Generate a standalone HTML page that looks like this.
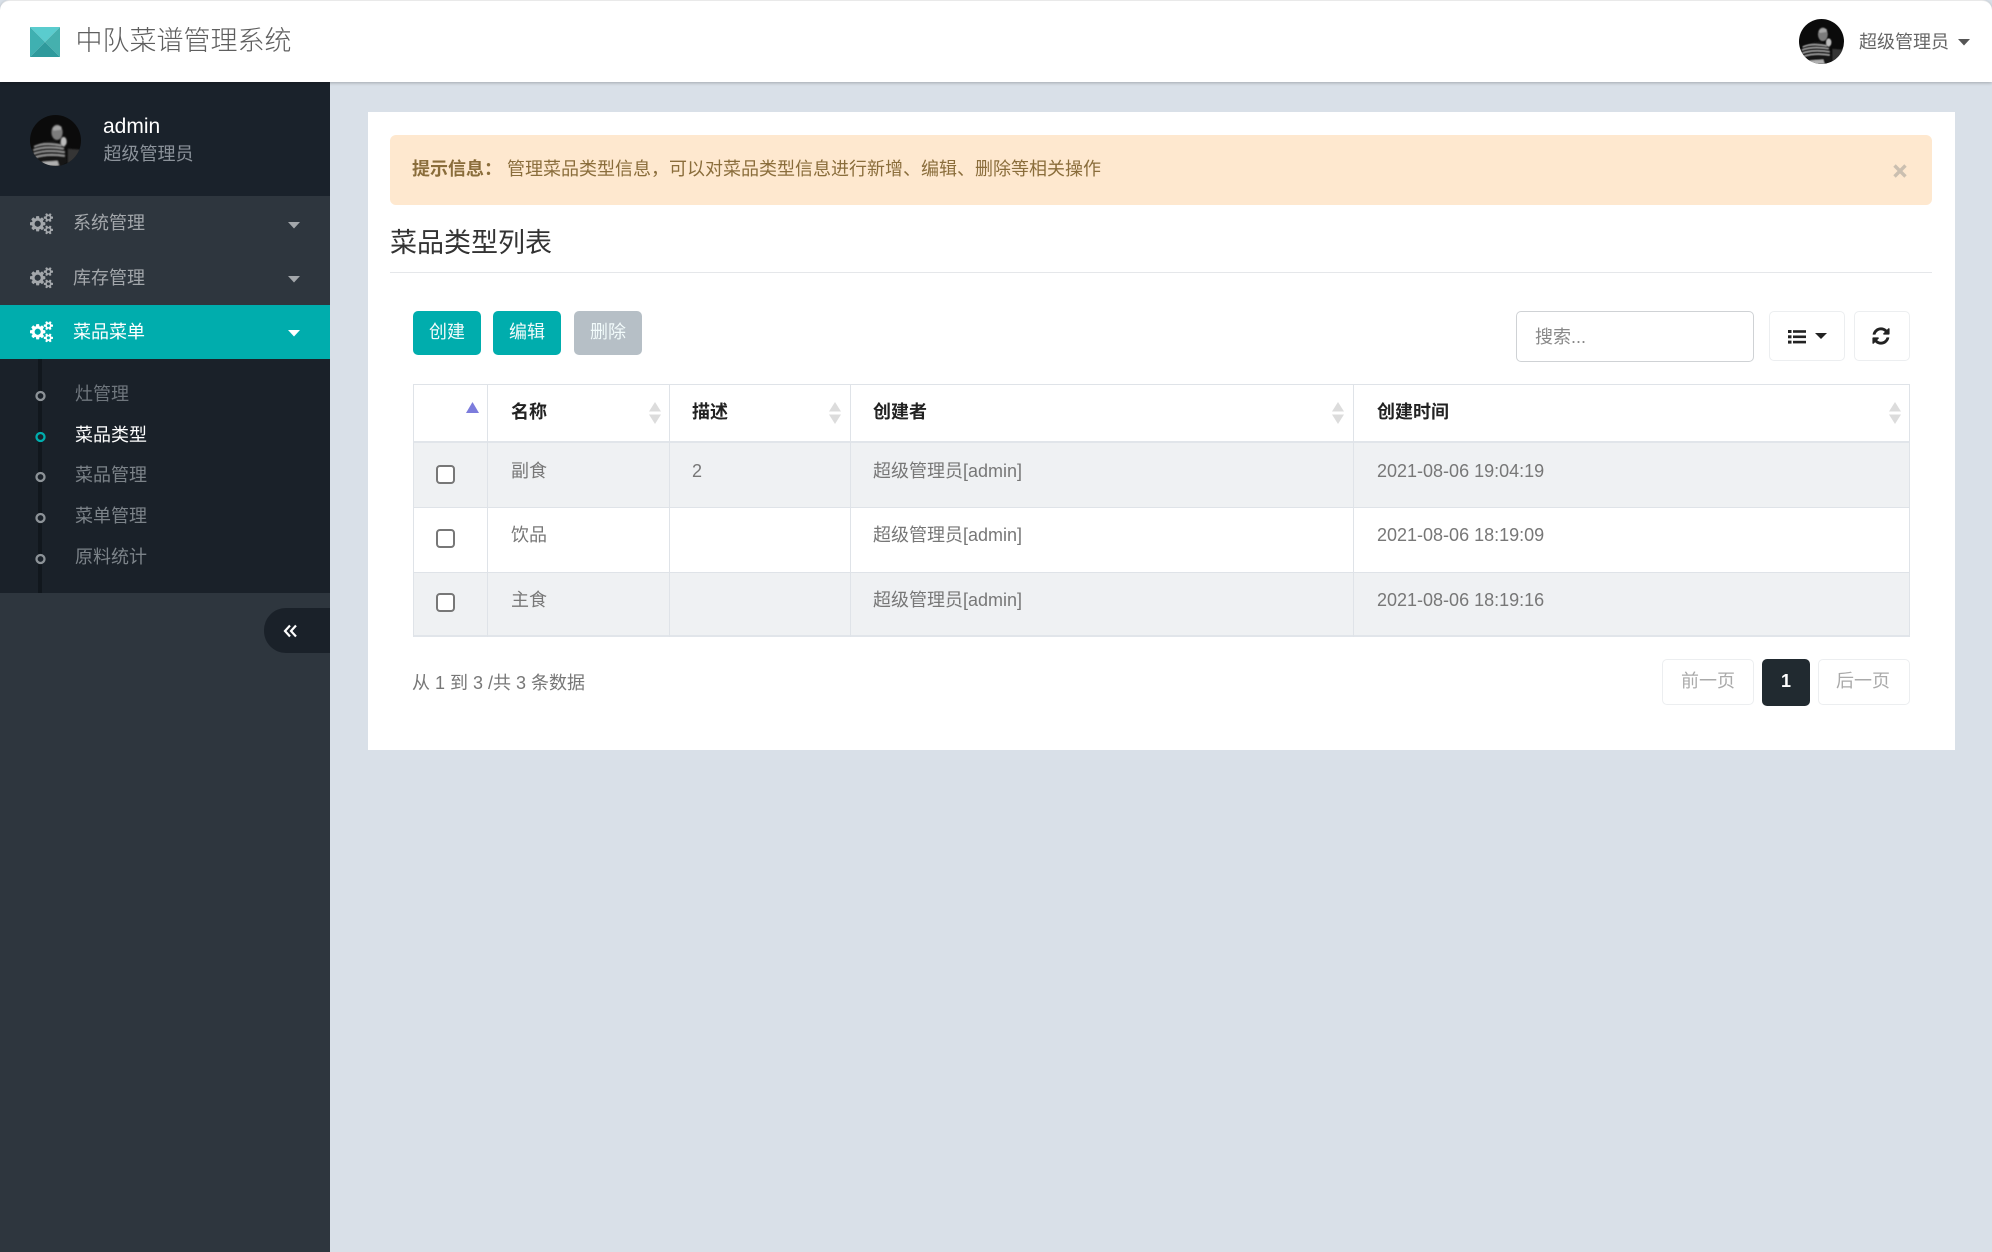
<!DOCTYPE html>
<html lang="zh-CN">
<head>
<meta charset="utf-8">
<title>中队菜谱管理系统</title>
<style>
*{box-sizing:border-box;margin:0;padding:0}
html,body{width:1992px;height:1252px;overflow:hidden;background:#d9e0e8;font-family:"Liberation Sans","Noto Sans CJK SC",sans-serif;font-size:18px;color:#777}
.a{position:absolute}
.t{position:absolute;white-space:nowrap;line-height:30px;height:30px}
svg{display:block;position:absolute}
#hd{left:0;top:0;width:1992px;height:82px;background:#fff;border-top:1px solid #e9e9e9;border-radius:10px 10px 0 0;box-shadow:0 1px 3px rgba(0,0,0,.25);z-index:5}
#sb{left:0;top:82px;width:330px;height:1170px;background:#2e363e}
.b{position:absolute;border-radius:5px;top:311px;height:44px;width:68px;background:#00adad;color:#f2fbfb;text-align:center;line-height:43px;font-size:18px}
.bx{position:absolute;background:#fff;border:1px solid #eceef0;border-radius:5px}
.c{position:absolute;left:436px;width:19px;height:19px;border:2px solid #777;border-radius:4px;background:#fff}
.l{position:absolute;top:384px;width:1px;height:253px;background:#dfe3e8}
.h{position:absolute;left:413px;width:1497px;height:1px;background:#dfe3e8}
.st{position:absolute;left:414px;width:1496px;background:#eff1f3}
.th{color:#222;font-weight:bold;font-size:18px}
</style>
</head>
<body>
<svg width="0" height="0" style="position:absolute">
<defs>
<symbol id="cogs" viewBox="0 0 1920 1792"><path d="M896 896q0-106-75-181t-181-75-181 75-75 181 75 181 181 75 181-75 75-181zm768 512q0-52-38-90t-90-38-90 38-38 90q0 53 37.5 90.5t90.5 37.5 90.5-37.5 37.5-90.5zm0-1024q0-52-38-90t-90-38-90 38-38 90q0 53 37.5 90.5t90.5 37.5 90.5-37.5 37.5-90.5zm-384 421v185q0 10-7 19.5t-16 10.5l-155 24q-11 35-32 76 34 48 90 115 7 11 7 20 0 12-7 19-23 30-82.5 89.5t-78.5 59.5q-11 0-21-7l-115-90q-37 19-77 31-11 108-23 155-7 24-30 24h-186q-11 0-20-7.5t-10-17.5l-23-153q-34-10-75-31l-118 89q-7 7-20 7-11 0-21-8-144-133-144-160 0-9 7-19 10-14 41-53t47-61q-23-44-35-82l-152-24q-10-1-17-9.5t-7-19.5v-185q0-10 7-19.5t16-10.5l155-24q11-35 32-76-34-48-90-115-7-11-7-20 0-12 7-20 22-30 82-89t79-59q11 0 21 7l115 90q34-18 77-32 11-108 23-154 7-24 30-24h186q11 0 20 7.5t10 17.5l23 153q34 10 75 31l118-89q8-7 20-7 11 0 21 8 144 133 144 160 0 8-7 19-12 16-42 54t-45 60q23 48 34 82l152 23q10 2 17 10.5t7 19.5zm640 533v140q0 16-149 31-12 27-30 52 51 113 51 138 0 4-4 7-122 71-124 71-8 0-46-47t-52-68q-20 2-30 2t-30-2q-14 21-52 68t-46 47q-2 0-124-71-4-3-4-7 0-25 51-138-18-25-30-52-149-15-149-31v-140q0-16 149-31 13-29 30-52-51-113-51-138 0-4 4-7 4-2 35-20t59-34 30-16q8 0 46 46.5t52 67.5q20-2 30-2t30 2q51-71 92-112l6-2q4 0 124 70 4 3 4 7 0 25-51 138 17 23 30 52 149 15 149 31zm0-1024v140q0 16-149 31-12 27-30 52 51 113 51 138 0 4-4 7-122 71-124 71-8 0-46-47t-52-68q-20 2-30 2t-30-2q-14 21-52 68t-46 47q-2 0-124-71-4-3-4-7 0-25 51-138-18-25-30-52-149-15-149-31v-140q0-16 149-31 13-29 30-52-51-113-51-138 0-4 4-7 4-2 35-20t59-34 30-16q8 0 46 46.5t52 67.5q20-2 30-2t30 2q51-71 92-112l6-2q4 0 124 70 4 3 4 7 0 25-51 138 17 23 30 52 149 15 149 31z"/></symbol>
<clipPath id="av"><circle cx="50" cy="50" r="50"/></clipPath>
<filter id="bl"><feGaussianBlur stdDeviation="1.4"/></filter>
<symbol id="avatar" viewBox="0 0 100 100">
<g clip-path="url(#av)">
<rect width="100" height="100" fill="#0b0b0b"/>
<g filter="url(#bl)">
<path d="M74 100V66l24 2v32z" fill="#343434"/>
<ellipse cx="53" cy="34" rx="11" ry="15" fill="#7c7c7c"/>
<path d="M44 26q8-8 18-3l-1 6-15 2z" fill="#a6a6a6"/>
<path d="M8 62Q22 52 44 50l24 8 4 34-10 8H14Q4 80 8 62z" fill="#161616"/>
<path d="M8 62Q28 53 62 60M6 69Q30 60 66 66M7 76Q32 67 68 73M10 83Q34 75 68 80" stroke="#a8a8a8" stroke-width="2.6" fill="none"/>
<path d="M24 92l30-2 3 10H22z" fill="#b0b0b0"/>
<ellipse cx="66" cy="52" rx="6" ry="9" fill="#bcbcbc"/>
</g>
</g>
</symbol>
</defs>
</svg>

<!-- header -->
<div id="hd" class="a"></div>
<svg style="left:30px;top:27px;z-index:6" width="30" height="30" viewBox="0 0 30 30">
<polygon points="0,0 30,0 15,15" fill="#5accce"/>
<polygon points="0,0 15,15 0,30" fill="#3fb0b1"/>
<polygon points="30,0 30,30 15,15" fill="#45b0ae"/>
<polygon points="0,30 30,30 15,15" fill="#2f9a9c"/>
</svg>
<div class="t" style="left:75.5px;top:26px;font-size:27px;color:#5e5e5e;z-index:6;font-weight:300">中队菜谱管理系统</div>
<svg style="left:1799px;top:19px;z-index:6" width="45" height="45"><use href="#avatar" width="45" height="45"/></svg>
<div class="t" style="left:1859px;top:27px;color:#666;z-index:6">超级管理员</div>
<svg style="left:1958px;top:39px;z-index:6" width="12" height="7"><polygon points="0,0 12,0 6,6.5" fill="#555"/></svg>

<!-- sidebar -->
<div id="sb" class="a"></div>
<div class="a" style="left:0;top:82px;width:330px;height:114px;background:#1a222b"></div>
<svg style="left:30px;top:115px" width="51" height="51"><use href="#avatar" width="51" height="51"/></svg>
<div class="t" style="left:103px;top:112px;color:#fff;font-size:21px">admin</div>
<div class="t" style="left:103.5px;top:139px;color:#8b929a">超级管理员</div>

<svg style="left:30px;top:213px;fill:#a3a7ab" width="23" height="21.5"><use href="#cogs" width="23" height="21.5"/></svg>
<div class="t" style="left:73px;top:208px;color:#a3a7ab">系统管理</div>
<svg style="left:288px;top:222px" width="12" height="7"><polygon points="0,0 12,0 6,6.5" fill="#a3a7ab"/></svg>

<svg style="left:30px;top:267px;fill:#a3a7ab" width="23" height="21.5"><use href="#cogs" width="23" height="21.5"/></svg>
<div class="t" style="left:73px;top:263px;color:#a3a7ab">库存管理</div>
<svg style="left:288px;top:276px" width="12" height="7"><polygon points="0,0 12,0 6,6.5" fill="#a3a7ab"/></svg>

<div class="a" style="left:0;top:305px;width:330px;height:54px;background:#00adad"></div>
<svg style="left:30px;top:321px;fill:#fff" width="23" height="21.5"><use href="#cogs" width="23" height="21.5"/></svg>
<div class="t" style="left:73px;top:317px;color:#fff">菜品菜单</div>
<svg style="left:288px;top:330px" width="12" height="7"><polygon points="0,0 12,0 6,6.5" fill="#fff"/></svg>

<div class="a" style="left:0;top:359px;width:330px;height:234px;background:#1a2129"></div>
<div class="a" style="left:38px;top:359px;width:4px;height:234px;background:#11171d"></div>
<svg style="left:33px;top:388px;overflow:visible" width="16" height="176" fill="#1a2129" stroke="#8d9398" stroke-width="2.3">
<circle cx="7.5" cy="8" r="4"/>
<circle cx="7.5" cy="49" r="4" stroke="#00adad"/>
<circle cx="7.5" cy="89" r="4"/>
<circle cx="7.5" cy="130" r="4"/>
<circle cx="7.5" cy="171" r="4"/>
</svg>
<div class="t" style="left:75px;top:379px;color:#6f767d">灶管理</div>
<div class="t" style="left:75px;top:420px;color:#fff">菜品类型</div>
<div class="t" style="left:75px;top:460px;color:#7c8389">菜品管理</div>
<div class="t" style="left:75px;top:501px;color:#7c8389">菜单管理</div>
<div class="t" style="left:75px;top:542px;color:#7c8389">原料统计</div>

<div class="a" style="left:264px;top:608px;width:66px;height:45px;background:#1a2129;border-radius:22px 0 0 22px"></div>
<svg style="left:283px;top:624px" width="15" height="14" fill="none" stroke="#fff" stroke-width="2.2"><polyline points="7,1.5 2,7 7,12.5"/><polyline points="13,1.5 8,7 13,12.5"/></svg>

<!-- card -->
<div class="a" style="left:368px;top:112px;width:1587px;height:638px;background:#fff"></div>
<div class="a" style="left:390px;top:135px;width:1542px;height:70px;background:#fee8cf;border-radius:6px"></div>
<div class="t" style="left:412px;top:154px;color:#8a6d3b;font-weight:bold">提示信息：</div>
<div class="t" style="left:507px;top:154px;color:#8a6d3b">管理菜品类型信息，可以对菜品类型信息进行新增、编辑、删除等相关操作</div>
<svg style="left:1893px;top:164px" width="14" height="14" stroke="#cbbfb0" stroke-width="3.4"><line x1="1.5" y1="1.5" x2="12.5" y2="12.5"/><line x1="12.5" y1="1.5" x2="1.5" y2="12.5"/></svg>

<div class="t" style="left:390px;top:228px;font-size:27px;color:#333">菜品类型列表</div>
<div class="a" style="left:390px;top:272px;width:1542px;height:1px;background:#e5e7ea"></div>

<div class="b" style="left:413px">创建</div>
<div class="b" style="left:493px">编辑</div>
<div class="b" style="left:574px;background:#b6bfc6">删除</div>

<div class="bx" style="left:1516px;top:311px;width:238px;height:51px;border-color:#cfd2d5"></div>
<div class="t" style="left:1535px;top:322px;color:#888">搜索...</div>
<div class="bx" style="left:1769px;top:311px;width:76px;height:50px"></div>
<svg style="left:1788px;top:330px" width="40" height="14" fill="#222">
<rect x="0" y="0" width="3.5" height="3" /><rect x="5" y="0.2" width="13" height="2.6"/>
<rect x="0" y="5.3" width="3.5" height="3"/><rect x="5" y="5.5" width="13" height="2.6"/>
<rect x="0" y="10.6" width="3.5" height="3"/><rect x="5" y="10.8" width="13" height="2.6"/>
<polygon points="27,3 39,3 33,9"/>
</svg>
<div class="bx" style="left:1854px;top:311px;width:56px;height:50px"></div>
<svg style="left:1871px;top:326px" width="20" height="20" viewBox="0 0 1792 1792" fill="#222"><path d="M1639 1056q0 5-1 7-64 268-268 434.5t-478 166.5q-146 0-282.5-55t-243.5-157l-129 129q-19 19-45 19t-45-19-19-45v-448q0-26 19-45t45-19h448q26 0 45 19t19 45-19 45l-137 137q71 66 161 102t187 36q134 0 250-65t186-179q11-17 53-117 8-23 30-23h192q13 0 22.5 9.5t9.5 22.5zm25-800v448q0 26-19 45t-45 19h-448q-26 0-45-19t-19-45 19-45l138-138q-148-137-349-137-134 0-250 65t-186 179q-11 17-53 117-8 23-30 23h-199q-13 0-22.5-9.5t-9.5-22.5v-7q65-268 270-434.5t480-166.5q146 0 284 55.5t245 156.5l130-129q19-19 45-19t45 19 19 45z"/></svg>

<!-- table -->
<div class="st" style="top:443px;height:65px"></div>
<div class="st" style="top:572px;height:64px"></div>
<div class="h" style="top:384px"></div>
<div class="h" style="top:441px;height:2px;background:#e1e5ea"></div>
<div class="h" style="top:507px"></div>
<div class="h" style="top:572px"></div>
<div class="h" style="top:635px;height:2px;background:#e1e5ea"></div>
<div class="l" style="left:413px"></div>
<div class="l" style="left:487px"></div>
<div class="l" style="left:669px"></div>
<div class="l" style="left:850px"></div>
<div class="l" style="left:1353px"></div>
<div class="l" style="left:1909px"></div>

<svg style="left:466px;top:402px" width="13" height="11"><polygon points="6.5,0 13,11 0,11" fill="#7c7cdc"/></svg>
<svg style="left:649px;top:402px" width="12" height="22" fill="#dcdcdc"><polygon points="6,0 12,9.5 0,9.5"/><polygon points="0,12.5 12,12.5 6,22"/></svg>
<svg style="left:829px;top:402px" width="12" height="22" fill="#dcdcdc"><polygon points="6,0 12,9.5 0,9.5"/><polygon points="0,12.5 12,12.5 6,22"/></svg>
<svg style="left:1332px;top:402px" width="12" height="22" fill="#dcdcdc"><polygon points="6,0 12,9.5 0,9.5"/><polygon points="0,12.5 12,12.5 6,22"/></svg>
<svg style="left:1889px;top:402px" width="12" height="22" fill="#dcdcdc"><polygon points="6,0 12,9.5 0,9.5"/><polygon points="0,12.5 12,12.5 6,22"/></svg>

<div class="t th" style="left:511px;top:397px">名称</div>
<div class="t th" style="left:692px;top:397px">描述</div>
<div class="t th" style="left:873px;top:397px">创建者</div>
<div class="t th" style="left:1377px;top:397px">创建时间</div>

<div class="c" style="top:465px"></div>
<div class="c" style="top:529px"></div>
<div class="c" style="top:593px"></div>

<div class="t" style="left:511px;top:456px">副食</div>
<div class="t" style="left:692px;top:456px">2</div>
<div class="t" style="left:873px;top:456px">超级管理员[admin]</div>
<div class="t" style="left:1377px;top:456px">2021-08-06 19:04:19</div>

<div class="t" style="left:511px;top:520px">饮品</div>
<div class="t" style="left:873px;top:520px">超级管理员[admin]</div>
<div class="t" style="left:1377px;top:520px">2021-08-06 18:19:09</div>

<div class="t" style="left:511px;top:585px">主食</div>
<div class="t" style="left:873px;top:585px">超级管理员[admin]</div>
<div class="t" style="left:1377px;top:585px">2021-08-06 18:19:16</div>

<div class="t" style="left:412px;top:668px">从 1 到 3 /共 3 条数据</div>

<div class="bx" style="left:1662px;top:659px;width:92px;height:46px"></div>
<div class="t" style="left:1681px;top:666px;color:#aaa">前一页</div>
<div class="a" style="left:1762px;top:659px;width:48px;height:47px;background:#212a30;border-radius:5px;color:#fff;text-align:center;line-height:44px;font-weight:bold">1</div>
<div class="bx" style="left:1818px;top:659px;width:92px;height:46px"></div>
<div class="t" style="left:1836px;top:666px;color:#aaa">后一页</div>
</body>
</html>
